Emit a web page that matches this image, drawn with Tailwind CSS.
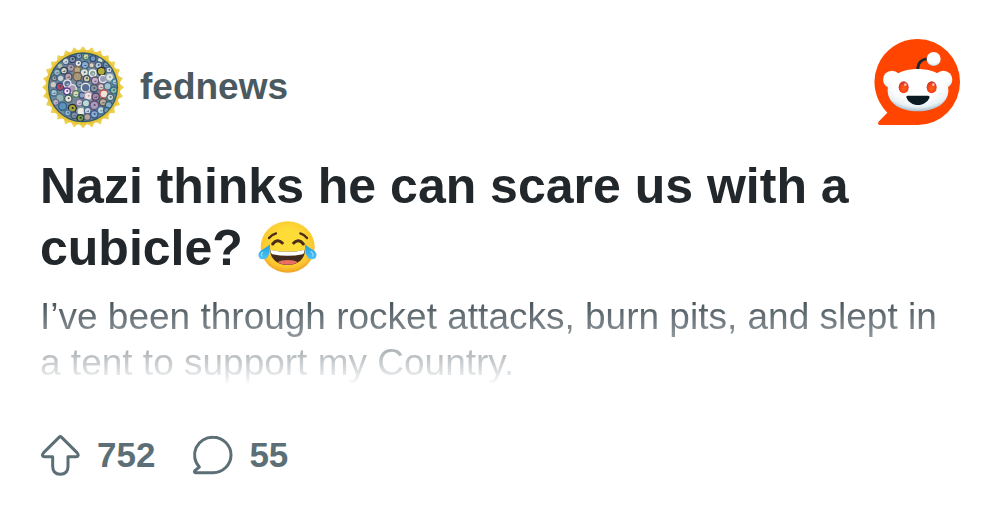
<!DOCTYPE html>
<html lang="en">
<head>
<meta charset="utf-8">
<meta name="viewport" content="width=device-width, initial-scale=1">
<title>fednews</title>
<script src="https://cdn.jsdelivr.net/npm/@tailwindcss/browser@4"></script>
</head>
<body class="bg-white font-['Liberation_Sans',Arial,sans-serif]">
<main class="px-10 pt-[39px] pb-9">
  <header class="flex items-start justify-between">
    <a href="#" class="flex items-center gap-[14px] pt-[5px] text-[#4a5a60]">
      <svg class="size-[86px]" viewBox="15 12 258 258" aria-hidden="true">
        <defs><clipPath id="seal"><circle cx="144" cy="142" r="101"/></clipPath></defs>
        <g id="rays" fill="#ecd052"></g>
        <circle cx="144" cy="142" r="112" fill="#e9c436"/>
        <circle cx="144" cy="142" r="105" fill="#2e5a68"/>
        <circle cx="144" cy="142" r="101" fill="#71879a"/>
        <g id="badges" clip-path="url(#seal)"></g>
      </svg>
      <span class="text-[37px] leading-[44px] font-bold">fednews</span>
    </a>
    <svg class="size-[86px]" viewBox="28 27 258 258" role="img" aria-label="Reddit">
      <defs>
        <radialGradient id="face" cx=".5" cy=".3" r=".7"><stop offset=".6" stop-color="#fff"/><stop offset=".85" stop-color="#e8f1f5"/><stop offset="1" stop-color="#a9bdca"/></radialGradient>
        <radialGradient id="eye" cx=".5" cy=".6" r=".55"><stop offset="0" stop-color="#ff6510"/><stop offset=".6" stop-color="#fb4318"/><stop offset="1" stop-color="#c8382c"/></radialGradient>
      </defs>
      <path fill="#ff4500" d="M159 27A127 129 0 0 1 159 285H47C40 285 38 279 43 274L68 248A129 129 0 0 1 159 27Z"/>
      <path d="M159 118C160 98 171 86 190 87" fill="none" stroke="#1c2830" stroke-width="8"/>
      <circle cx="207" cy="87" r="21" fill="url(#face)"/>
      <circle cx="82" cy="149" r="27" fill="url(#face)"/>
      <circle cx="236" cy="149" r="27" fill="url(#face)"/>
      <path fill="url(#face)" d="M159 117C213 117 251 142 251 181C251 220 212 244 159 244S69 220 69 181C69 142 105 117 159 117Z"/>
      <ellipse cx="117" cy="172" rx="15" ry="18" fill="url(#eye)"/>
      <ellipse cx="201" cy="172" rx="15" ry="18" fill="url(#eye)"/>
      <circle cx="122" cy="164" r="4" fill="#ffc2b0"/><circle cx="206" cy="164" r="4" fill="#ffc2b0"/>
      <path d="M129 197H190C194 197 196 200 194 204C188 217 175 225 160 225S131 217 126 204C124 200 125 197 129 197Z" fill="#0c1a22"/>
    </svg>
  </header>

  <h1 class="mt-[25px] text-[50px] leading-[62px] font-bold text-[#21272a]">Nazi thinks he can scare us with a cubicle?
    <svg class="ml-px inline-block h-[54px] w-[60px] align-[-9px]" viewBox="684 32 180 162" role="img" aria-label="😂">
      <defs>
        <radialGradient id="joy" cx=".5" cy=".4" r=".62"><stop offset=".4" stop-color="#fddc38"/><stop offset=".8" stop-color="#fbc62f"/><stop offset="1" stop-color="#ee9a22"/></radialGradient>
        <linearGradient id="tear" x2="0" y2="1"><stop offset="0" stop-color="#1d9ce0"/><stop offset="1" stop-color="#4fc3f7"/></linearGradient>
      </defs>
      <ellipse cx="773" cy="113" rx="81" ry="77" fill="url(#joy)"/>
      <g fill="none" stroke="#4c2d19" stroke-linecap="round">
        <path stroke-width="7" d="M717 86Q724 76 738 72M811 72Q824 76 831 86"/>
        <path stroke-width="9" d="M728 104Q742 86 757 101M791 101Q806 86 820 104"/>
      </g>
      <path d="M720 121Q773 134 825 121C825 149 804 167 773 167S721 149 720 121Z" fill="#422b1d"/>
      <path d="M721 121Q773 134 824 121Q824 131 818 135Q773 144 727 135Q721 131 721 121Z" fill="#fff"/>
      <path d="M743 159C755 150 791 150 803 159C786 169 760 169 743 159Z" fill="#ed6f63"/>
      <path d="M719 105C721 127 717 148 701 150C687 151 682 139 688 129C694 119 709 118 719 105Z" fill="url(#tear)"/>
      <path d="M826 105C824 127 828 148 844 150C858 151 863 139 857 129C851 119 836 118 826 105Z" fill="url(#tear)"/>
      <path d="M698 129Q691 134 696 140M843 127Q852 133 848 140" stroke="#8bd9fa" stroke-width="4" fill="none" stroke-linecap="round"/>
    </svg></h1>

  <p class="mt-[15px] bg-linear-to-b from-[#4c585f] from-10% to-white bg-clip-text text-[37px] leading-[46px] text-transparent">I’ve been through rocket attacks, burn pits, and slept in a tent to support my Country.</p>

  <footer class="mt-[46px] flex items-center gap-9 text-[35px] leading-[46px] font-bold text-[#5c6f76]">
    <button type="button" class="flex items-center gap-4" aria-label="Upvote, 752">
      <svg class="h-[42px] w-[41px]" viewBox="16 23 123 126" fill="none" stroke="currentColor" stroke-width="9" stroke-linejoin="round" aria-hidden="true"><path d="M73 33Q77 29 81 33L127 79C133 86 131 91 124 91H100V120C100 136 92 144 77 144S54 136 54 120V91H30C23 91 21 86 27 79Z"/></svg>
      <span>752</span>
    </button>
    <button type="button" class="flex items-center gap-4" aria-label="Comments, 55">
      <svg class="h-[42px] w-[42px]" viewBox="471 27 126 126" fill="none" stroke="currentColor" stroke-width="9" stroke-linejoin="round" aria-hidden="true"><path d="M537 37A54 53 0 0 1 537 143H485C481 143 480 140 483 137L496 126A54 53 0 0 1 537 37Z"/></svg>
      <span>55</span>
    </button>
  </footer>
</main>
<script>
const ns = 'http://www.w3.org/2000/svg';
function add(parent, name, attrs) {
  const el = document.createElementNS(ns, name);
  for (const key in attrs) el.setAttribute(key, attrs[key]);
  parent.appendChild(el);
}
// Scalloped gold rim: 28 rounded points around the seal.
const rays = document.getElementById('rays');
for (let i = 0; i < 28; i++) {
  add(rays, 'path', { d: 'M130 34Q138 27 141 22Q144 17 147 22Q150 27 158 34Z', transform: `rotate(${i * 360 / 28} 144 142)` });
}
// Agency badges: x, y, radius, ring colour, centre colour.
const badges = [
  [132,48,9,'#3c5a86','#a8bfd0'],[153,50,10,'#3f7a70','#d6d2b0'],[174,56,10,'#2d4d80','#7894b8'],
  [112,58,11,'#31405e','#8494ae'],[92,64,11,'#4d6785','#cfd8dc'],[196,60,10,'#50707a','#d8e0d4'],
  [130,70,11,'#51618a','#e8e8e0'],[150,75,12,'#2f537e','#8baed0'],[170,76,9,'#766d7c','#ddd3ba'],
  [190,76,11,'#45617f','#b5c9da'],[213,75,10,'#31507e','#8095a8'],[75,78,10,'#68868b','#adbcae'],
  [107,83,12,'#525e83','#ad9dad'],[87,92,11,'#31405f','#d9d5bf'],[127,90,11,'#83714f','#bba884'],
  [148,98,13,'#506f80','#dfe0d8'],[173,100,11,'#f0f0ea','#8aa1a0'],[199,94,13,'#27322a','#b5ad38'],
  [222,90,10,'#526e98','#dce4e8'],[66,97,11,'#386886','#9fb9c3'],[77,115,11,'#53778c','#c5d2d8'],
  [58,115,9,'#4e5d73','#a2afb4'],[100,110,12,'#454e72','#b9a3a7'],[127,110,14,'#755643','#a69878'],
  [155,116,11,'#3b526b','#d7c7a3'],[180,122,12,'#684f75','#c5b5c7'],[204,117,12,'#e8e8e3','#9a9cbd'],
  [224,112,13,'#89a1a8','#dce4df'],[240,126,10,'#4b7b91','#a4c7cf'],[55,134,11,'#667889','#c8ccc4'],
  [75,140,12,'#344a79','#b5495d'],[97,131,12,'#e0e5e5','#5b719a'],[112,146,13,'#e4e3ed','#ab9cad'],
  [96,154,11,'#623890','#f0edf5'],[134,132,11,'#3c587d','#8f9da8'],[152,143,14,'#f1ece3','#596f91'],
  [177,145,12,'#3c5278','#8b9996'],[198,141,11,'#7c596c','#d6c9ce'],[218,139,12,'#466b88','#a6c1ca'],
  [236,151,11,'#2e708a','#90b9a0'],[57,158,11,'#456888','#a9c5ce'],[75,174,13,'#5a8294','#92b1b3'],
  [100,176,12,'#3c5f68','#f0e4d5'],[123,162,11,'#507b57','#d9d5bd'],[141,166,10,'#3e5189','#8ea4c5'],
  [160,168,13,'#b29aaf','#eee6e2'],[182,170,12,'#524461','#a38baa'],[207,162,13,'#c6594f','#eee2dc'],
  [226,172,11,'#456978','#c8d3d2'],[62,187,10,'#71688e','#b8bfcf'],[83,199,13,'#2f6285','#5b91ba'],
  [112,205,13,'#222e34','#a8a237'],[133,188,11,'#827195','#d6c6d5'],[153,190,12,'#3f6a7b','#c4d8d5'],
  [178,196,14,'#5d4d77','#a99bb9'],[204,187,12,'#554b4a','#b5ae99'],[221,195,11,'#32607e','#86aac0'],
  [98,219,10,'#4d759c','#95b9d0'],[118,226,11,'#425275','#7e91a7'],[138,214,13,'#7d9faa','#ecece3'],
  [136,234,11,'#263b3e','#839f43'],[158,212,11,'#4e688e','#cdd2d8'],[157,231,11,'#54637f','#b6a79c'],
  [178,223,12,'#3d5586','#8badd1'],[198,211,12,'#3d7398','#bed3dd'],[215,211,10,'#315c79','#6b9bab']
];
const group = document.getElementById('badges');
badges.forEach(([cx, cy, r, ring, core], i) => {
  add(group, 'circle', { cx, cy, r: r - 1, fill: core, stroke: ring, 'stroke-width': 4 });
  if (i % 3 === 0) add(group, 'circle', { cx: cx + 1, cy: cy - 1, r: 3, fill: ring });
  if (i % 3 === 1) add(group, 'path', { d: `M${cx - 5} ${cy + 3}h9v-4z`, fill: ring });
});
</script>
</body>
</html>
